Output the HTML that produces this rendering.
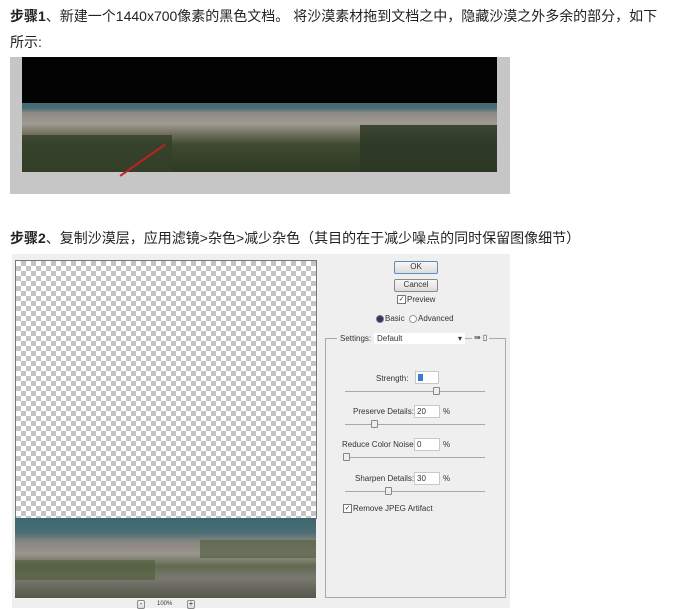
<!DOCTYPE html>
<html><head><meta charset="utf-8"><style>
body{margin:0;width:682px;height:608px;background:#fff;position:relative;overflow:hidden;font-family:"Liberation Sans","Noto Sans CJK SC",sans-serif;}
.a{position:absolute}
.t{font-size:14px;color:#222;white-space:nowrap}
.s{font-family:"Liberation Sans",sans-serif;font-size:8px;color:#333;white-space:nowrap}
.btn{border:1px solid #8a8a8a;background:linear-gradient(#f8f8f8,#dcdcdc);text-align:center;line-height:10px;border-radius:2px}
.inp{background:#fff;border:1px solid #c8c8c8;height:11px}
.sl{height:1px;background:#a8a8a8}
.th{width:5px;height:6px;border:1px solid #888;background:#eee;border-radius:1px}
.cb{width:7px;height:7px;border:1px solid #777;background:#fff;font-size:7px;line-height:7px;text-align:center}
</style></head><body>
<div class="a t" style="left:10px;top:6px"><b>步骤1</b>、新建一个1440x700像素的黑色文档。 将沙漠素材拖到文档之中，隐藏沙漠之外多余的部分，如下</div>
<div class="a t" style="left:10px;top:32px">所示:</div>
<div class="a" style="left:10px;top:57px;width:500px;height:137px;background:#c6c6c6"></div>
<div class="a" style="left:22px;top:57px;width:475px;height:46px;background:#030303"></div>
<div class="a" style="left:22px;top:103px;width:475px;height:69px;background:linear-gradient(#3f6a74 0,#4a7078 8%,#8d8a84 14%,#a09a92 30%,#70705e 45%,#3f4a30 60%,#2f3a24 100%)"></div>
<div class="a" style="left:22px;top:135px;width:150px;height:37px;background:#34402a;opacity:.8"></div>
<div class="a" style="left:360px;top:125px;width:137px;height:47px;background:#2c3824;opacity:.85"></div>
<div class="a" style="left:120px;top:175px;width:55px;height:1.5px;background:#c02020;transform:rotate(-35deg);transform-origin:left"></div>
<div class="a t" style="left:10px;top:228px"><b>步骤2</b>、复制沙漠层，应用滤镜&gt;杂色&gt;减少杂色（其目的在于减少噪点的同时保留图像细节）</div>
<div class="a" style="left:12px;top:254px;width:498px;height:354px;background:#efefef"></div>
<div class="a" style="left:15px;top:260px;width:300px;height:258px;border:1px solid #777;border-bottom:none;background-color:#fff;background-image:linear-gradient(45deg,#c4c4c4 25%,transparent 25%,transparent 75%,#c4c4c4 75%),linear-gradient(45deg,#c4c4c4 25%,transparent 25%,transparent 75%,#c4c4c4 75%);background-size:10px 10px;background-position:0 0,5px 5px"></div>
<div class="a" style="left:15px;top:518px;width:301px;height:80px;background:linear-gradient(#3d6670 0,#4a6e74 18%,#8a8680 30%,#9a958e 45%,#5f6a50 60%,#7a7870 75%,#55584a 100%)"></div>
<div class="a" style="left:15px;top:560px;width:140px;height:20px;background:#4e5e3a;opacity:.6"></div>
<div class="a" style="left:200px;top:540px;width:116px;height:18px;background:#4a5a38;opacity:.6"></div>
<div class="a btn s" style="left:137px;top:600px;width:6px;height:7px;line-height:6px">-</div>
<div class="a s" style="left:157px;top:601px;font-size:6px">100%</div>
<div class="a btn s" style="left:187px;top:600px;width:6px;height:7px;line-height:6px">+</div>
<div class="a btn s" style="left:394px;top:261px;width:42px;height:11px;border-color:#5b8bc0">OK</div>
<div class="a btn s" style="left:394px;top:279px;width:42px;height:11px">Cancel</div>
<div class="a cb s" style="left:397px;top:295px">✓</div><div class="a s" style="left:407px;top:295px">Preview</div>
<div class="a" style="left:376px;top:315px;width:6px;height:6px;border-radius:50%;border:1px solid #777;background:#336"></div><div class="a s" style="left:385px;top:314px">Basic</div>
<div class="a" style="left:409px;top:315px;width:6px;height:6px;border-radius:50%;border:1px solid #999;background:#fff"></div><div class="a s" style="left:418px;top:314px">Advanced</div>
<div class="a" style="left:325px;top:338px;width:179px;height:258px;border:1px solid #aaa"></div>
<div class="a s" style="left:337px;top:334px;background:#efefef;padding:0 3px">Settings:</div>
<div class="a s" style="left:374px;top:333px;width:88px;height:11px;background:#fff;line-height:11px;padding-left:3px">Default<span style="float:right;padding-right:3px">▾</span></div>
<div class="a s" style="left:472px;top:333px;background:#efefef;padding:0 2px">⇛ ▯</div>
<div class="a s" style="left:376px;top:374px">Strength:</div>
<div class="a inp" style="left:415px;top:371px;width:22px"><div style="margin:2px;width:5px;height:7px;background:#3a7bd5"></div></div>
<div class="a sl" style="left:345px;top:391px;width:140px"></div><div class="a th" style="left:433px;top:387px"></div>
<div class="a s" style="left:353px;top:407px">Preserve Details:</div>
<div class="a inp s" style="left:414px;top:405px;width:22px;line-height:11px;padding-left:2px">20</div><div class="a s" style="left:443px;top:407px">%</div>
<div class="a sl" style="left:345px;top:424px;width:140px"></div><div class="a th" style="left:371px;top:420px"></div>
<div class="a s" style="left:342px;top:440px">Reduce Color Noise:</div>
<div class="a inp s" style="left:414px;top:438px;width:22px;line-height:11px;padding-left:2px">0</div><div class="a s" style="left:443px;top:440px">%</div>
<div class="a sl" style="left:345px;top:457px;width:140px"></div><div class="a th" style="left:343px;top:453px"></div>
<div class="a s" style="left:355px;top:474px">Sharpen Details:</div>
<div class="a inp s" style="left:414px;top:472px;width:22px;line-height:11px;padding-left:2px">30</div><div class="a s" style="left:443px;top:474px">%</div>
<div class="a sl" style="left:345px;top:491px;width:140px"></div><div class="a th" style="left:385px;top:487px"></div>
<div class="a cb s" style="left:343px;top:504px">✓</div><div class="a s" style="left:353px;top:504px">Remove JPEG Artifact</div>
</body></html>
